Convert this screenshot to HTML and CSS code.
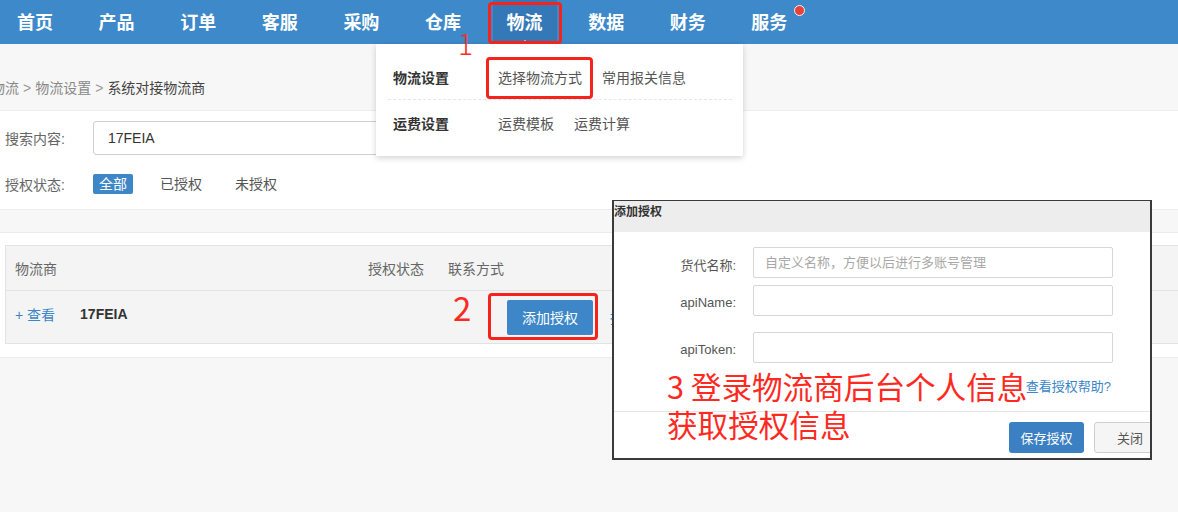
FILE: index.html
```html
<!DOCTYPE html>
<html lang="zh-CN">
<head>
<meta charset="utf-8">
<title>系统对接物流商</title>
<link rel="stylesheet" href="styles.css">
</head>
<body>
<header class="topnav">
  <ul class="nav-list">
    <li class="nav-item">首页</li>
    <li class="nav-item">产品</li>
    <li class="nav-item">订单</li>
    <li class="nav-item">客服</li>
    <li class="nav-item">采购</li>
    <li class="nav-item">仓库</li>
    <li class="nav-item active">物流</li>
    <li class="nav-item">数据</li>
    <li class="nav-item">财务</li>
    <li class="nav-item">服务<span class="badge"></span></li>
  </ul>
</header>

<main class="page">
  <div class="crumbs">
    <span class="crumb">物流</span><span class="sep">&gt;</span><span class="crumb">物流设置</span><span class="sep">&gt;</span><span class="crumb current">系统对接物流商</span>
  </div>

  <section class="panel filter">
    <div class="filter-row">
      <span class="filter-label">搜索内容:</span>
      <div class="search-input">17FEIA</div>
    </div>
    <div class="filter-row status-row">
      <span class="filter-label">授权状态:</span>
      <span class="tag active">全部</span>
      <span class="tag">已授权</span>
      <span class="tag">未授权</span>
    </div>
  </section>

  <section class="panel list">
    <div class="table">
      <div class="thead">
        <div class="c1">物流商</div>
        <div class="c2">授权状态</div>
        <div class="c3">联系方式</div>
        <div class="c4"></div>
      </div>
      <div class="trow">
        <div class="c1 up"><a class="link">+ 查看</a><span class="name">17FEIA</span></div>
        <div class="c2"></div>
        <div class="c3"></div>
        <div class="c4"><button class="btn-primary">添加授权</button><a class="link more">授权帮助</a></div>
      </div>
    </div>
  </section>
</main>

<div class="dropdown">
  <div class="dd-row">
    <span class="dd-title">物流设置</span>
    <span class="dd-link">选择物流方式</span>
    <span class="dd-link">常用报关信息</span>
  </div>
  <div class="dd-divider"></div>
  <div class="dd-row second">
    <span class="dd-title">运费设置</span>
    <span class="dd-link">运费模板</span>
    <span class="dd-link">运费计算</span>
  </div>
</div>

<div class="modal">
  <div class="modal-head">添加授权</div>
  <div class="modal-body">
    <div class="form-grid">
      <label class="form-label">货代名称:</label>
      <div class="form-input placeholder">自定义名称，方便以后进行多账号管理</div>
      <label class="form-label row2">apiName:</label>
      <div class="form-input row2"></div>
      <label class="form-label row3">apiToken:</label>
      <div class="form-input row3"></div>
    </div>
    <div class="help"><a class="help-link">查看授权帮助?</a></div>
  </div>
  <div class="modal-foot">
    <button class="btn-save">保存授权</button>
    <button class="btn-close">关闭</button>
  </div>
</div>

<div class="mark mark-nav"></div>
<div class="mark mark-dd"></div>
<div class="mark mark-btn"></div>
<div class="note note-1">1</div>
<div class="note note-2">2</div>
<div class="note note-3">3 登录物流商后台个人信息<br>获取授权信息</div>
</body>
</html>
```

FILE: styles.css
```css
html, body {
  margin: 0;
  padding: 0;
}
body {
  width: 1178px;
  height: 512px;
  overflow: hidden;
  position: relative;
  background: #f7f7f7;
  font-family: "Liberation Sans", "Noto Sans CJK SC", sans-serif;
  font-size: 14px;
  color: #333;
}

/* top navigation */
.topnav {
  height: 44px;
  background: #3e89c9;
}
.nav-list {
  display: flex;
  gap: 17.6px;
  margin: 0;
  padding: 0 0 0 3px;
  list-style: none;
  height: 44px;
}
.nav-item {
  position: relative;
  padding: 0 14px;
  line-height: 46px;
  font-size: 18px;
  font-weight: bold;
  color: #fff;
}
.nav-item.active {
  background: #3478b8;
}
.nav-item.active::after {
  content: "";
  position: absolute;
  left: 50%;
  bottom: 0;
  margin-left: -4px;
  border: 4px solid transparent;
  border-bottom-color: #fff;
  border-top-width: 0;
}
.badge {
  position: absolute;
  left: 57px;
  top: 5px;
  width: 9px;
  height: 9px;
  border-radius: 50%;
  background: #e8413b;
  border: 1.5px solid #f3f3f3;
}

/* breadcrumb */
.crumbs {
  padding: 34px 0 12px;
  margin-left: -9px;
  line-height: 20px;
  color: #888;
  font-size: 14px;
  white-space: nowrap;
}
.sep {
  margin: 0 4px;
  color: #999;
}
.crumb.current {
  color: #444;
}

/* panels */
.panel {
  background: #fff;
  border-top: 1px solid #ececec;
  border-bottom: 1px solid #ececec;
}
.filter {
  padding: 10px 0 13px 5px;
  margin-bottom: 22px;
}
.filter-row {
  display: flex;
  align-items: center;
  height: 34px;
}
.status-row {
  height: 24px;
  margin-top: 17px;
}
.filter-label {
  width: 88px;
  color: #666;
  font-size: 14px;
}
.search-input {
  width: 340px;
  height: 32px;
  line-height: 32px;
  border: 1px solid #cfcfcf;
  border-radius: 3px;
  padding-left: 14px;
  font-size: 14px;
  color: #333;
}
.tag {
  padding: 0 6px;
  line-height: 20px;
  border-radius: 2px;
  color: #555;
  margin-right: 21px;
}
.tag.active {
  background: #3d87c8;
  color: #fff;
}

/* table */
.list {
  padding: 12px 0 13px 5px;
}
.table {
  width: 1200px;
  background: #f4f4f4;
  border: 1px solid #e3e3e3;
}
.thead, .trow {
  display: flex;
  align-items: center;
}
.thead {
  height: 44px;
  color: #666;
}
.trow {
  height: 52px;
  border-top: 1px solid #e3e3e3;
}
.c1 {
  width: 353px;
  padding-left: 9px;
  display: flex;
  align-items: center;
}
.c1.up {
  padding-bottom: 6px;
}
.c2 { width: 80px; }
.c3 { width: 59px; }
.c4 {
  flex: 1;
  display: flex;
  align-items: center;
}
.link {
  color: #3a86c8;
  text-decoration: none;
}
.name {
  margin-left: 25px;
  font-weight: bold;
  color: #333;
}
.btn-primary {
  width: 86px;
  height: 35px;
  border: none;
  border-radius: 2px;
  background: #3d87c8;
  color: #fff;
  font-family: inherit;
  font-size: 14px;
  padding: 0;
}
.more {
  margin-left: 17px;
}

/* dropdown */
.dropdown {
  position: absolute;
  left: 376px;
  top: 44px;
  width: 367px;
  height: 112px;
  box-sizing: border-box;
  padding-top: 11px;
  background: #fff;
  box-shadow: 0 2px 6px rgba(0, 0, 0, 0.18);
}
.dd-row {
  display: flex;
  align-items: center;
  height: 44px;
  padding-left: 17px;
  gap: 20px;
}
.dd-row.second {
  height: 46px;
}
.dd-title {
  width: 85px;
  font-weight: bold;
  color: #333;
}
.dd-link {
  color: #555;
}
.dd-divider {
  margin: 0 11px 0 12px;
  border-top: 1px dashed #e6e6e6;
}

/* modal */
.modal {
  position: absolute;
  left: 612px;
  top: 200px;
  width: 540px;
  height: 260px;
  box-sizing: border-box;
  border: 2px solid #3a3a3a;
  border-top-width: 1px;
  background: #fff;
  overflow: hidden;
}
.modal-head {
  height: 31px;
  box-sizing: border-box;
  padding: 3px 0 0 0;
  line-height: 16px;
  background: #ededed;
  font-size: 12px;
  font-weight: bold;
  color: #333;
}
.modal-body {
  padding-top: 15px;
}
.form-grid {
  display: grid;
  grid-template-columns: 122px 360px;
  column-gap: 17px;
  align-items: center;
}
.form-label {
  text-align: right;
  font-size: 13px;
  color: #555;
  padding-top: 3px;
}
.form-input {
  height: 29px;
  line-height: 29px;
  border: 1px solid #d6d6d6;
  border-radius: 2px;
  padding-left: 11px;
  font-size: 13px;
}
.placeholder {
  color: #a8a8a8;
}
.row2 { margin-top: 7px; }
.row3 { margin-top: 16px; }
.help {
  margin-top: 13px;
  height: 20px;
  line-height: 20px;
  text-align: right;
  padding-right: 39px;
}
.help-link {
  color: #3a86c8;
  font-size: 13px;
}
.modal-foot {
  margin-top: 15px;
  border-top: 1px solid #e6e6e6;
  padding: 10px 0 0 395px;
  display: flex;
  gap: 10px;
  white-space: nowrap;
}
.btn-save, .btn-close {
  flex: 0 0 auto;
  height: 31px;
  border-radius: 3px;
  font-family: inherit;
  font-size: 13px;
  padding: 0;
}
.btn-save {
  width: 75px;
  border: none;
  background: #3a80c3;
  color: #fff;
}
.btn-close {
  width: 72px;
  border: 1px solid #cfcfcf;
  background: #f5f5f5;
  color: #555;
}

/* red annotations */
.mark {
  position: absolute;
  border: 3px solid #f5231b;
  border-radius: 4px;
  box-sizing: border-box;
}
.mark-nav {
  left: 488px;
  top: 2px;
  width: 74px;
  height: 42px;
}
.mark-dd {
  left: 486px;
  top: 57px;
  width: 107px;
  height: 42px;
}
.mark-btn {
  left: 488px;
  top: 293px;
  width: 110px;
  height: 47px;
}
.note {
  position: absolute;
  color: #ff2a1f;
  font-family: "Noto Sans CJK SC", sans-serif;
  white-space: nowrap;
}
.note-1 {
  left: 458px;
  top: 25px;
  font-size: 28px;
  line-height: 36px;
  font-weight: 300;
}
.note-2 {
  left: 453px;
  top: 285px;
  font-size: 33px;
  line-height: 44px;
}
.note-3 {
  left: 667px;
  top: 367px;
  font-size: 30.6px;
  line-height: 38px;
}
```
